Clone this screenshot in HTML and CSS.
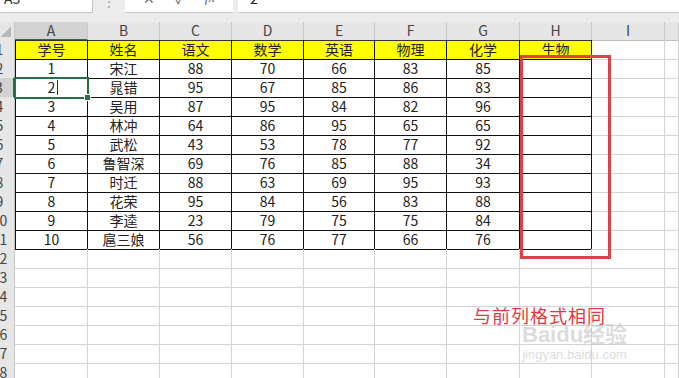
FILE: index.html
```html
<!DOCTYPE html>
<html lang="zh-CN">

<head>
    <meta charset="UTF-8">
    <title>成绩表</title>
    <link rel="stylesheet" href="styles.css">
</head>

<body>
    <!-- Name box and formula bar -->
    <div class="top">
        <div class="bar">
            <div class="name-box">A3</div>
            <div class="dots">⋮</div>
            <div class="fx-btns">
                <span class="fx-icon">✕</span>
                <span class="fx-icon">✓</span>
                <span class="fx-icon fx">fx</span>
            </div>
            <div class="formula">2</div>
        </div>
    </div>

    <div class="sheet">
        <div class="row head">
            <div class="corner"></div>
            <div class="col sel-col">A</div>
            <div class="col">B</div>
            <div class="col">C</div>
            <div class="col">D</div>
            <div class="col">E</div>
            <div class="col">F</div>
            <div class="col">G</div>
            <div class="col">H</div>
            <div class="col">I</div>
            <div class="col"></div>
        </div>
        <div class="row title">
            <div class="rh">1</div>
            <div class="c t first">学号</div><div class="c t">姓名</div><div class="c t">语文</div><div class="c t">数学</div>
            <div class="c t">英语</div><div class="c t">物理</div><div class="c t">化学</div><div class="c t">生物</div>
            <div class="c"></div><div class="c"></div>
        </div>
        <div class="row">
            <div class="rh">2</div>
            <div class="c t first">1</div><div class="c t">宋江</div><div class="c t">88</div><div class="c t">70</div>
            <div class="c t">66</div><div class="c t">83</div><div class="c t">85</div><div class="c t"></div>
            <div class="c"></div><div class="c"></div>
        </div>
        <div class="row">
            <div class="rh sel-row">3</div>
            <div class="c t first sel"><span class="edit">2</span></div><div class="c t">晁错</div><div class="c t">95</div><div class="c t">67</div>
            <div class="c t">85</div><div class="c t">86</div><div class="c t">83</div><div class="c t"></div>
            <div class="c"></div><div class="c"></div>
        </div>
        <div class="row">
            <div class="rh">4</div>
            <div class="c t first">3</div><div class="c t">吴用</div><div class="c t">87</div><div class="c t">95</div>
            <div class="c t">84</div><div class="c t">82</div><div class="c t">96</div><div class="c t"></div>
            <div class="c"></div><div class="c"></div>
        </div>
        <div class="row">
            <div class="rh">5</div>
            <div class="c t first">4</div><div class="c t">林冲</div><div class="c t">64</div><div class="c t">86</div>
            <div class="c t">95</div><div class="c t">65</div><div class="c t">65</div><div class="c t"></div>
            <div class="c"></div><div class="c"></div>
        </div>
        <div class="row">
            <div class="rh">6</div>
            <div class="c t first">5</div><div class="c t">武松</div><div class="c t">43</div><div class="c t">53</div>
            <div class="c t">78</div><div class="c t">77</div><div class="c t">92</div><div class="c t"></div>
            <div class="c"></div><div class="c"></div>
        </div>
        <div class="row">
            <div class="rh">7</div>
            <div class="c t first">6</div><div class="c t">鲁智深</div><div class="c t">69</div><div class="c t">76</div>
            <div class="c t">85</div><div class="c t">88</div><div class="c t">34</div><div class="c t"></div>
            <div class="c"></div><div class="c"></div>
        </div>
        <div class="row">
            <div class="rh">8</div>
            <div class="c t first">7</div><div class="c t">时迁</div><div class="c t">88</div><div class="c t">63</div>
            <div class="c t">69</div><div class="c t">95</div><div class="c t">93</div><div class="c t"></div>
            <div class="c"></div><div class="c"></div>
        </div>
        <div class="row">
            <div class="rh">9</div>
            <div class="c t first">8</div><div class="c t">花荣</div><div class="c t">95</div><div class="c t">84</div>
            <div class="c t">56</div><div class="c t">83</div><div class="c t">88</div><div class="c t"></div>
            <div class="c"></div><div class="c"></div>
        </div>
        <div class="row">
            <div class="rh">10</div>
            <div class="c t first">9</div><div class="c t">李逵</div><div class="c t">23</div><div class="c t">79</div>
            <div class="c t">75</div><div class="c t">75</div><div class="c t">84</div><div class="c t"></div>
            <div class="c"></div><div class="c"></div>
        </div>
        <div class="row">
            <div class="rh">11</div>
            <div class="c t first">10</div><div class="c t">扈三娘</div><div class="c t">56</div><div class="c t">76</div>
            <div class="c t">77</div><div class="c t">66</div><div class="c t">76</div><div class="c t"></div>
            <div class="c"></div><div class="c"></div>
        </div>
        <div class="row">
            <div class="rh">12</div>
            <div class="c"></div><div class="c"></div><div class="c"></div><div class="c"></div><div class="c"></div>
            <div class="c"></div><div class="c"></div><div class="c"></div><div class="c"></div><div class="c"></div>
        </div>
        <div class="row">
            <div class="rh">13</div>
            <div class="c"></div><div class="c"></div><div class="c"></div><div class="c"></div><div class="c"></div>
            <div class="c"></div><div class="c"></div><div class="c"></div><div class="c"></div><div class="c"></div>
        </div>
        <div class="row">
            <div class="rh">14</div>
            <div class="c"></div><div class="c"></div><div class="c"></div><div class="c"></div><div class="c"></div>
            <div class="c"></div><div class="c"></div><div class="c"></div><div class="c"></div><div class="c"></div>
        </div>
        <div class="row">
            <div class="rh">15</div>
            <div class="c"></div><div class="c"></div><div class="c"></div><div class="c"></div><div class="c"></div>
            <div class="c"></div><div class="c"></div><div class="c"></div><div class="c"></div><div class="c"></div>
        </div>
        <div class="row">
            <div class="rh">16</div>
            <div class="c"></div><div class="c"></div><div class="c"></div><div class="c"></div><div class="c"></div>
            <div class="c"></div><div class="c"></div><div class="c"></div><div class="c"></div><div class="c"></div>
        </div>
        <div class="row">
            <div class="rh">17</div>
            <div class="c"></div><div class="c"></div><div class="c"></div><div class="c"></div><div class="c"></div>
            <div class="c"></div><div class="c"></div><div class="c"></div><div class="c"></div><div class="c"></div>
        </div>
        <div class="row">
            <div class="rh">18</div>
            <div class="c"></div><div class="c"></div><div class="c"></div><div class="c"></div><div class="c"></div>
            <div class="c"></div><div class="c"></div><div class="c"></div><div class="c"></div><div class="c"></div>
        </div>

        <!-- Annotations -->
        <div class="mark-box"></div>
        <div class="note">与前列格式相同</div>
        <div class="watermark">
            <div class="wm-logo">Baidu经验</div>
            <div class="wm-url">jingyan.baidu.com</div>
        </div>
    </div>
</body>

</html>
```

FILE: styles.css
```css
body {
    margin: 0;
    overflow: hidden;
    background-color: #fff;
    font-family: "Noto Sans CJK SC", "Liberation Sans", sans-serif;
    color: #222;
}

/* formula bar */
.top {
    margin-top: -11px;
    padding-bottom: 9px;
    background-color: #ececec;
}

.bar {
    display: flex;
    height: 24px;
    font-size: 14px;
    line-height: 18px;
}

.name-box {
    width: 93px;
    padding-left: 4px;
    box-sizing: border-box;
    background-color: #fff;
    border-right: 1px solid #c6c6c6;
    border-bottom: 1px solid #c6c6c6;
    color: #333;
}

.dots {
    width: 32px;
    text-align: center;
    color: #9a9a9a;
    font-size: 12px;
    line-height: 24px;
}

.fx-btns {
    width: 108px;
    display: flex;
    justify-content: space-around;
    padding: 0 8px;
    box-sizing: border-box;
    background-color: #fff;
    border-bottom: 1px solid #c6c6c6;
}

.fx-icon {
    color: #666;
}

.fx-icon.fx {
    font-style: italic;
    font-family: "Liberation Serif", serif;
}

.formula {
    flex: 1;
    margin-left: 5px;
    padding-left: 12px;
    background-color: #fff;
    border-bottom: 1px solid #c6c6c6;
}

/* sheet grid */
.sheet {
    position: relative;
    margin-left: -15px;
}

.row {
    display: grid;
    grid-template-columns: 30px 73px 72px 72px 72px 71px 72px 73px 72px 73px 1fr;
    height: 19px;
    font-size: 14px;
    line-height: 19px;
}

.row > div {
    box-sizing: border-box;
    text-align: center;
    white-space: nowrap;
}

.row.head {
    height: 18px;
    line-height: 17px;
}

.corner,
.col {
    background-color: #e6e6e6;
    border-right: 1px solid #c8c8c8;
    border-bottom: 1px solid #bdbdbd;
    color: #444;
}

.corner {
    background: linear-gradient(to top left, #b8b8b8 50%, transparent 50%) right 3px bottom 3px / 10px 10px no-repeat, #e6e6e6;
}

.col.sel-col {
    background-color: #d2d2d2;
    border-bottom: 2px solid #217346;
}

.rh {
    background-color: #e6e6e6;
    border-right: 1px solid #c8c8c8;
    border-bottom: 1px solid #d0d0d0;
    color: #444;
}

.rh.sel-row {
    background-color: #d2d2d2;
    border-right: 2px solid #217346;
}

.c {
    border-right: 1px solid #d4d4d4;
    border-bottom: 1px solid #d4d4d4;
}

/* bordered table A1:H11 */
.c.t {
    border-right-color: #111;
    border-bottom-color: #111;
}

.c.t.first {
    border-left: 1px solid #111;
}

.title .c.t {
    background-color: #ffff00;
    border-top: 1px solid #333;
    line-height: 17px;
}

.c.sel {
    position: relative;
    z-index: 1;
    outline: 2px solid #217346;
    outline-offset: -1px;
}

.c.sel::after {
    content: "";
    position: absolute;
    right: -4px;
    bottom: -4px;
    width: 5px;
    height: 5px;
    background-color: #217346;
    border: 1px solid #fff;
}

.edit {
    display: inline-block;
    padding-right: 2px;
    margin-left: 3px;
    line-height: 15px;
    border-right: 1px solid #333;
}

/* annotations */
.mark-box {
    position: absolute;
    left: 535px;
    top: 33px;
    width: 91px;
    height: 204px;
    border: 3px solid #d9434b;
    box-sizing: border-box;
}

.note {
    position: absolute;
    left: 488px;
    top: 280px;
    font-size: 18px;
    letter-spacing: 1px;
    color: #e2383f;
}

.watermark {
    position: absolute;
    left: 537px;
    top: 300px;
    color: rgba(190, 190, 190, 0.55);
    text-align: center;
}

.wm-logo {
    font-family: "Liberation Sans", "Noto Sans CJK SC", sans-serif;
    font-weight: bold;
    font-size: 22px;
    line-height: 26px;
}

.wm-url {
    font-family: "Liberation Sans", sans-serif;
    font-size: 13px;
    line-height: 14px;
}
```
